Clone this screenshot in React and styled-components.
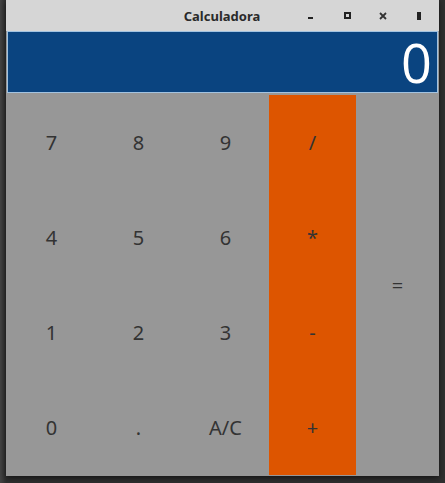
import React from 'react'
import styled, { createGlobalStyle } from 'styled-components'

const GlobalStyle = createGlobalStyle`
	html, body {
		margin: 0;
		padding: 0;
		background: #3b3b3b;
		font-family: "Noto Sans", "Open Sans", sans-serif;
	}
`

const keys = [
	{ label: '7' }, { label: '8' }, { label: '9' }, { label: '/', op: true },
	{ label: '=', tall: true },
	{ label: '4' }, { label: '5' }, { label: '6' }, { label: '*', op: true },
	{ label: '1' }, { label: '2' }, { label: '3' }, { label: '-', op: true },
	{ label: '0' }, { label: '.' }, { label: 'A/C' }, { label: '+', op: true },
]

const App = () => (
	<>
		<GlobalStyle />
		<Desktop>
			<Window>
				<TitleBar>
					<Title>Calculadora</Title>
					<Controls>
						<Control>
							<svg width="6" height="3"><rect x="0" y="0" width="5" height="2" fill="#222" /></svg>
						</Control>
						<Control>
							<svg width="7" height="7"><rect x="1" y="1" width="5" height="5" fill="none" stroke="#222" strokeWidth="2" /></svg>
						</Control>
						<Control>
							<svg width="8" height="8"><path d="M1 1L7 7M7 1L1 7" stroke="#333" strokeWidth="1.8" /></svg>
						</Control>
						<Control>
							<svg width="4" height="8"><rect x="0" y="0" width="4" height="8" fill="#222" /></svg>
						</Control>
					</Controls>
				</TitleBar>
				<Display>0</Display>
				<Keypad>
					{keys.map((k) => (
						<Key key={k.label} $op={k.op} $tall={k.tall}>{k.label}</Key>
					))}
				</Keypad>
			</Window>
		</Desktop>
	</>
)

const Desktop = styled.div`
	width: 445px;
	height: 483px;
	padding-left: 6px;
	box-sizing: border-box;
	background: linear-gradient(to right, #444 0, #2f2f2f 6px, #2f2f2f 100%);
`

const Window = styled.div`
	width: 433px;
	height: 476px;
	display: flex;
	flex-direction: column;
	background: #979797;
	box-shadow: 0 2px 6px rgba(0, 0, 0, 0.6);
`

const TitleBar = styled.div`
	height: 31px;
	flex: none;
	position: relative;
	display: flex;
	align-items: center;
	justify-content: center;
	background: #d6d6d6;
`

const Title = styled.div`
	font-size: 13px;
	font-weight: bold;
	color: #2a2a2a;
	margin-right: 1px;
`

const Controls = styled.div`
	position: absolute;
	right: 2px;
	top: 0;
	height: 31px;
	display: flex;
	align-items: center;
`

const Control = styled.div`
	width: 36px;
	display: flex;
	justify-content: center;
	align-items: center;
	&:first-child svg {
		margin-top: 5px;
	}
`

const Display = styled.div`
	height: 60px;
	flex: none;
	margin: 0 1px;
	border: 1px solid #a3c3e0;
	background: #0a4480;
	color: #fff;
	font-family: "Open Sans", "Noto Sans", sans-serif;
	font-weight: 400;
	font-size: 54px;
	line-height: 60px;
	text-align: right;
	padding-right: 5px;
`

const Keypad = styled.div`
	flex: 1;
	display: grid;
	grid-template-columns: 87px 87px 87px 87px 1fr;
	grid-template-rows: repeat(4, 95px);
	padding: 2px 0 0 2px;
`

const Key = styled.div`
	display: flex;
	align-items: center;
	justify-content: center;
	font-size: 20px;
	color: #333;
	background: ${(p) => (p.$op ? '#dd5500' : 'transparent')};
	grid-row: ${(p) => (p.$tall ? '1 / span 4' : 'auto')};
	grid-column: ${(p) => (p.$tall ? '5' : 'auto')};
`

export default App
